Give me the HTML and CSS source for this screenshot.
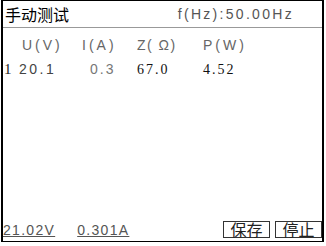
FILE: index.html
```html
<!DOCTYPE html>
<html lang="zh">

<head>
    <meta charset="UTF-8">
    <meta name="viewport" content="width=device-width, initial-scale=1.0">
    <title>手动测试</title>
    <link rel="stylesheet" href="styles.css">
</head>

<body>
    <div class="screen">
        <div class="header">
            <span class="title">手动测试</span>
            <span class="freq">f(Hz):50.00Hz</span>
        </div>
        <div class="table">
            <span></span>
            <span class="head">U(V)</span>
            <span class="head">I(A)</span>
            <span class="head ohm">Z( Ω)</span>
            <span class="head">P(W)</span>
            <span class="idx">1</span>
            <span class="val wide">20.1</span>
            <span class="val light">0.3</span>
            <span class="val serif">67.0</span>
            <span class="val serif">4.52</span>
        </div>
        <div class="footer">
            <span class="meter">21.02V</span>
            <span class="meter">0.301A</span>
            <div class="buttons">
                <button type="button">保存</button>
                <button type="button">停止</button>
            </div>
        </div>
    </div>
</body>

</html>
```

FILE: styles.css
```css
body {
    margin: 0;
    background: #fff;
    font-family: "Liberation Sans", "Noto Sans CJK SC", sans-serif;
}

.screen {
    box-sizing: border-box;
    margin: 0 0 0 1px;
    width: 323px;
    height: 242px;
    border: 1px solid #000;
    border-left-width: 2px;
    border-right-width: 2px;
    display: flex;
    flex-direction: column;
}

.header {
    height: 26px;
    border-bottom: 1px solid #999;
    display: flex;
    align-items: center;
    justify-content: space-between;
    padding: 0 28px 0 2px;
}

.title {
    font-size: 16px;
    color: #000;
}

.freq {
    font-size: 14px;
    color: #555;
    letter-spacing: 2.3px;
}

.table {
    display: grid;
    grid-template-columns: 19px 60px 55px 66px auto;
    align-items: baseline;
    row-gap: 8px;
    padding: 9px 0 0 0;
    font-size: 14px;
}

.head {
    color: #666;
    letter-spacing: 3px;
    white-space: pre;
}

.head.ohm {
    letter-spacing: 1.5px;
}

.idx {
    padding-left: 1px;
    font-size: 15px;
    color: #222;
    font-family: "Liberation Serif", serif;
}

.val {
    color: #333;
}

.val.wide {
    margin-left: -3px;
    letter-spacing: 2.5px;
    color: #444;
}

.val.light {
    color: #777;
    padding-left: 8px;
    letter-spacing: 2px;
}

.val.serif {
    font-family: "Liberation Serif", serif;
    color: #111;
    letter-spacing: 2px;
}

.footer {
    margin-top: auto;
    display: flex;
    align-items: flex-end;
    padding: 0 0 3px 0;
}

.meter {
    font-size: 14px;
    color: #555;
    letter-spacing: 1.3px;
    text-decoration: underline;
    margin-right: 22px;
}

.buttons {
    margin-left: auto;
    display: flex;
    gap: 5px;
}

.buttons button {
    font-family: "Noto Sans CJK SC", sans-serif;
    font-size: 16px;
    line-height: 15px;
    width: 47px;
    color: #222;
    background: #fff;
    border: 1px solid #333;
    border-radius: 0;
    padding: 0;
    margin: 0;
}
```
